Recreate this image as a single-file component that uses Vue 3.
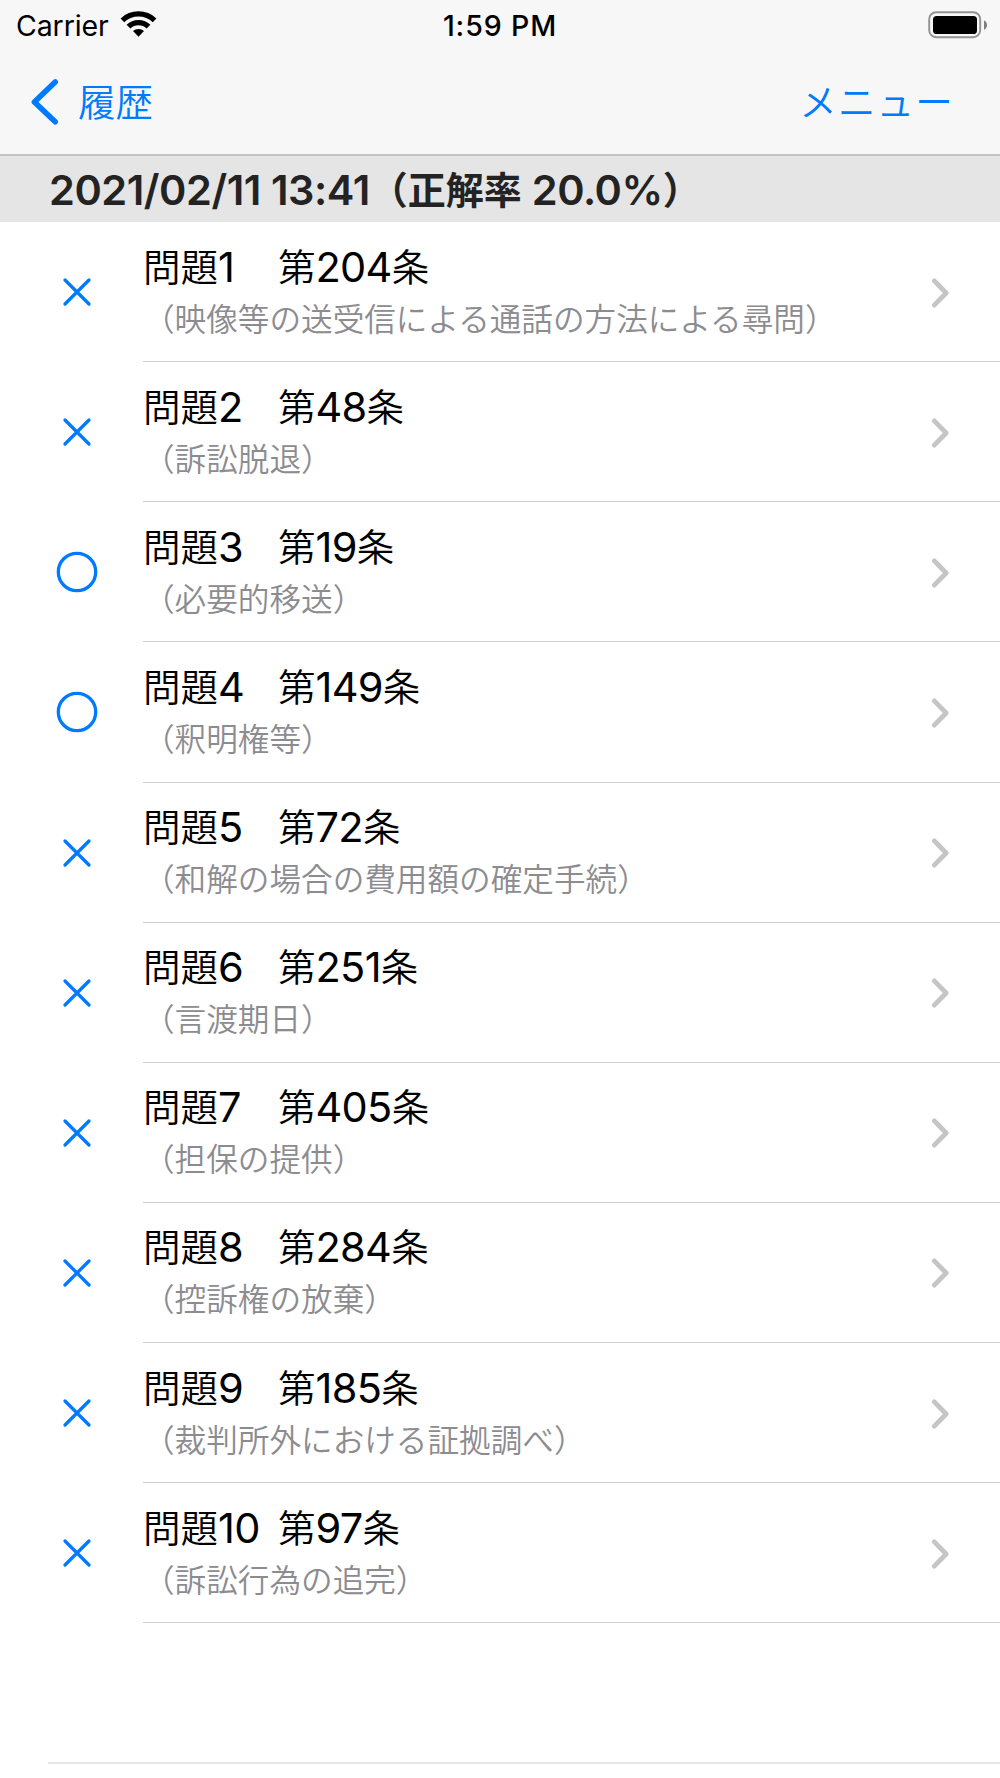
<script setup>
// Ergebnisse der Fragen, correct: true = Kreis, false = Kreuz
const results = [
  { no: 1, article: '204', title: '（映像等の送受信による通話の方法による尋問）', correct: false },
  { no: 2, article: '48', title: '（訴訟脱退）', correct: false },
  { no: 3, article: '19', title: '（必要的移送）', correct: true },
  { no: 4, article: '149', title: '（釈明権等）', correct: true },
  { no: 5, article: '72', title: '（和解の場合の費用額の確定手続）', correct: false },
  { no: 6, article: '251', title: '（言渡期日）', correct: false },
  { no: 7, article: '405', title: '（担保の提供）', correct: false },
  { no: 8, article: '284', title: '（控訴権の放棄）', correct: false },
  { no: 9, article: '185', title: '（裁判所外における証拠調べ）', correct: false },
  { no: 10, article: '97', title: '（訴訟行為の追完）', correct: false }
]
</script>

<template>
  <div class="screen">
    <header class="top">
      <!-- Statusleiste -->
      <div class="status-bar">
        <div class="status-left">
          <span class="carrier">Carrier</span>
          <svg class="wifi" width="38" height="28" viewBox="0 0 38 28">
            <path d="M0.6 8.4 A26 26 0 0 1 36.4 8.4 L32.8 12.2 A20.6 20.6 0 0 0 4.2 12.2 Z" />
            <path d="M6.6 14.8 A17 17 0 0 1 30.4 14.8 L26.6 18.5 A11.6 11.6 0 0 0 10.4 18.5 Z" />
            <path d="M13 21 A8.4 8.4 0 0 1 24 21 L18.5 26.8 Z" />
          </svg>
        </div>
        <span class="time">1:59 PM</span>
        <div class="status-right">
          <svg class="battery" width="60" height="28" viewBox="0 0 60 28">
            <rect x="1.2" y="1.2" width="51" height="25" rx="7" fill="none" stroke="#929292" stroke-width="1.9" />
            <rect x="5" y="5" width="44" height="18" rx="3.6" />
            <path d="M56 9.2 Q59 10.8 59 14 Q59 17.2 56 18.8 Z" fill="#7d7d7d" />
          </svg>
        </div>
      </div>

      <!-- Navigation -->
      <nav class="nav-bar">
        <button class="back">
          <svg width="29" height="46" viewBox="0 0 29 46">
            <path d="M25.2 3 L4.4 23 L25.2 42.7" />
          </svg>
          <span>履歴</span>
        </button>
        <button class="menu">メニュー</button>
      </nav>
    </header>

    <h2 class="section">2021/02/11 13:41<span class="kanji">（正解率</span> 20.0%<span class="kanji">）</span></h2>

    <ul class="list">
      <li v-for="r in results" :key="r.no" class="row">
        <div class="mark">
          <svg width="42" height="42" viewBox="0 0 42 42">
            <circle v-if="r.correct" cx="21" cy="21" r="18.7" />
            <path v-else d="M9 9 L33 33 M33 9 L9 33" />
          </svg>
        </div>
        <div class="cell">
          <div class="text">
            <div class="heading">
              <span class="number"><span class="kanji">問題</span>{{ r.no }}</span>
              <span class="article"><span class="kanji">第</span>{{ r.article }}<span class="kanji">条</span></span>
            </div>
            <div class="caption">{{ r.title }}</div>
          </div>
          <svg class="chevron" width="20" height="32" viewBox="0 0 20 32">
            <path d="M4.3 3.9 L16.2 16 L4.3 28.1" />
          </svg>
        </div>
      </li>
    </ul>
    <div class="empty-row"></div>
  </div>
</template>

<style>
body {
  margin: 0;
  background: #fff;
}
</style>

<style scoped>
.screen {
  width: 1000px;
  height: 1778px;
  overflow: hidden;
  background: #fff;
  font-family: Inter, "Noto Sans CJK JP", sans-serif;
  color: #000;
}

.top {
  box-sizing: border-box;
  height: 156px;
  background: #f7f7f7;
  border-bottom: 2px solid #c3c3c3;
}

.status-bar {
  display: grid;
  grid-template-columns: 1fr auto 1fr;
  height: 50px;
  font-size: 28.5px;
  line-height: 51px;
}

.status-left {
  display: flex;
  padding-left: 16px;
  gap: 11px;
}

.carrier {
  letter-spacing: -0.1px;
}

.wifi {
  margin-top: 10px;
}

.time {
  font-weight: 500;
  letter-spacing: 0.9px;
}

.status-right {
  display: flex;
  justify-content: flex-end;
  padding: 11px 12px 0 0;
}

.nav-bar {
  display: flex;
  justify-content: space-between;
  align-items: center;
  height: 104px;
  padding: 0 46px 0 30px;
}

.nav-bar button {
  display: flex;
  align-items: center;
  padding: 0;
  border: none;
  background: none;
  color: #007aff;
  font-family: "Noto Sans CJK JP", sans-serif;
  font-size: 37.5px;
  font-weight: 350;
  line-height: 56px;
}

.nav-bar .back {
  gap: 19px;
}

.nav-bar .menu,
.back span {
  padding-bottom: 5px;
}

.nav-bar .menu {
  letter-spacing: 1.2px;
}

.back path {
  fill: none;
  stroke: #007aff;
  stroke-width: 5.6;
  stroke-linecap: round;
  stroke-linejoin: round;
}

.section {
  height: 66px;
  margin: 0;
  padding-left: 49px;
  background: #e5e5e5;
  color: #232323;
  font-size: 41.5px;
  font-weight: 600;
  letter-spacing: -0.45px;
  line-height: 69px;
  white-space: pre;
}

.kanji {
  font-family: "Noto Sans CJK JP", sans-serif;
  font-size: 37.5px;
  font-weight: 350;
  letter-spacing: 0;
  line-height: 1;
  vertical-align: 1px;
}

.section .kanji {
  font-size: 38px;
  font-weight: 700;
}

.list {
  margin: 0;
  padding: 0;
  list-style: none;
}

.row {
  display: flex;
  height: 140.13px;
}

.mark {
  display: flex;
  align-items: center;
  justify-content: flex-end;
  width: 98px;
  margin-right: 45px;
}

.mark svg {
  fill: none;
  stroke: #007aff;
  stroke-width: 3.3;
  stroke-linecap: round;
}

.cell {
  box-sizing: border-box;
  display: flex;
  flex: 1;
  align-items: center;
  justify-content: space-between;
  padding: 2px 50px 0 0;
  border-bottom: 1px solid #cfcfd1;
}

.text {
  padding-bottom: 4px;
}

.heading {
  display: flex;
  height: 52px;
  font-size: 41.5px;
  letter-spacing: -0.7px;
  line-height: 51px;
}

.number {
  width: 135px;
}

.caption {
  color: #8c8c90;
  font-family: "Noto Sans CJK JP", sans-serif;
  font-size: 31.62px;
  font-weight: 350;
  line-height: 46px;
}

.chevron path {
  fill: none;
  stroke: #c5c5c7;
  stroke-width: 4.8;
  stroke-linecap: round;
  stroke-linejoin: round;
}

.empty-row {
  box-sizing: border-box;
  height: 141px;
  margin-left: 48px;
  border-bottom: 2px solid #e5e5e6;
}
</style>
